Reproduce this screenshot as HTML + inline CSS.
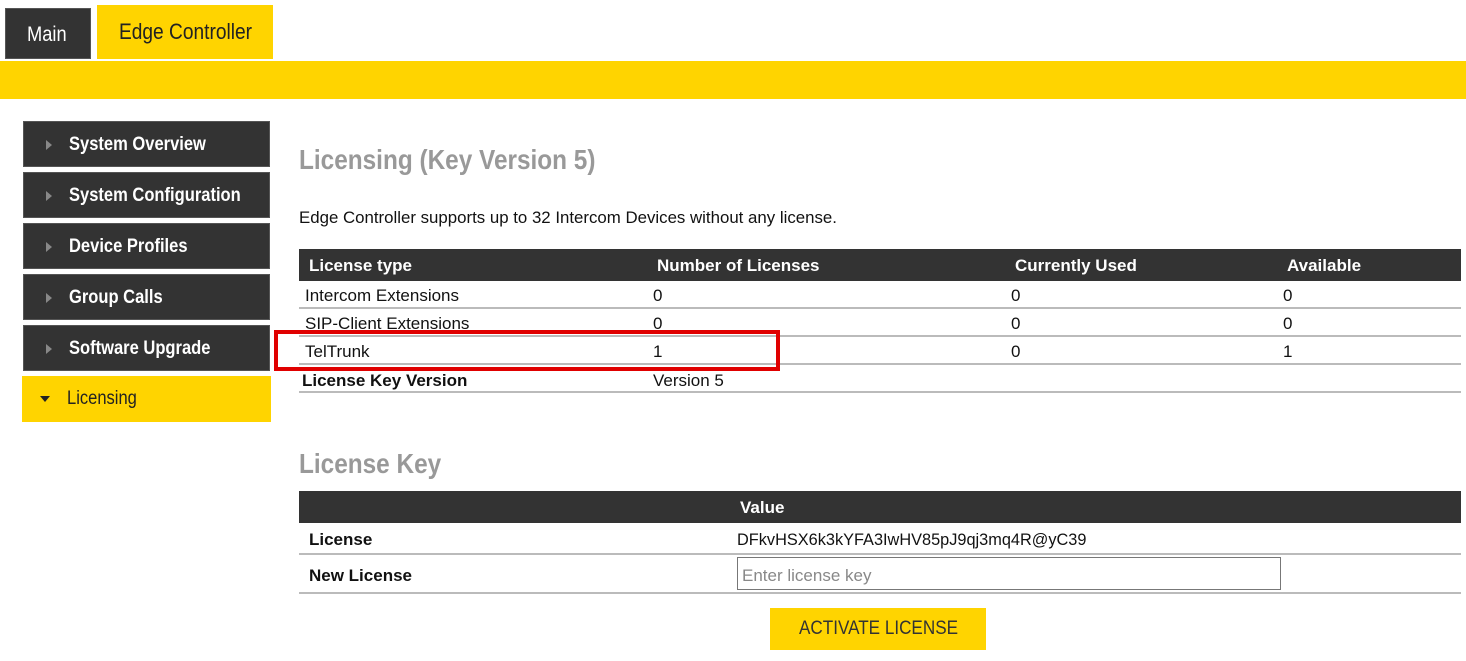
<!DOCTYPE html>
<html><head><meta charset="utf-8"><style>
*{margin:0;padding:0;box-sizing:border-box}
body{width:1466px;height:661px;background:#fff;position:relative;overflow:hidden;font-family:"Liberation Sans",sans-serif;color:#111}
.a{position:absolute}
.dark{background:#333;color:#fff}
.yel{background:#ffd400}
.s{display:inline-block;transform:scaleX(0.87);transform-origin:left center;white-space:nowrap}
.nav{position:absolute;left:23px;width:247px;height:46px;background:#333;color:#fff;font-size:19px;line-height:46px;padding-left:45px;font-weight:bold;border:1px solid #555}
.nav:before{content:"";position:absolute;left:22px;top:18px;border-left:6px solid #888;border-top:5px solid transparent;border-bottom:5px solid transparent}
.t{position:absolute;font-size:17px;white-space:nowrap}
.hr{position:absolute;left:299px;width:1162px;height:2px;background:#bbb}
</style></head><body>
<div class="a dark" style="left:5px;top:8px;width:86px;height:51px;font-size:21px;line-height:51px;padding-left:21px;border:1px solid #555"><span class="s">Main</span></div>
<div class="a yel" style="left:97px;top:5px;width:176px;height:54px;font-size:22px;line-height:54px;padding-left:22px;color:#222"><span class="s">Edge Controller</span></div>
<div class="a yel" style="left:0;top:61px;width:1466px;height:38px"></div>

<div class="nav" style="top:121px"><span class="s">System Overview</span></div>
<div class="nav" style="top:172px"><span class="s">System Configuration</span></div>
<div class="nav" style="top:223px"><span class="s">Device Profiles</span></div>
<div class="nav" style="top:274px"><span class="s">Group Calls</span></div>
<div class="nav" style="top:325px"><span class="s">Software Upgrade</span></div>
<div class="a yel" style="left:22px;top:376px;width:249px;height:46px;font-size:19px;line-height:46px;padding-left:45px;color:#222"><span class="s">Licensing</span></div>
<div class="a" style="left:40px;top:396px;border-top:6px solid #222;border-left:5px solid transparent;border-right:5px solid transparent"></div>

<div class="t" style="left:299px;top:144px;font-size:28px;font-weight:bold;color:#999"><span class="s">Licensing (Key Version 5)</span></div>
<div class="t" style="left:299px;top:208px"><span class="s" style="transform:scaleX(0.99)">Edge Controller supports up to 32 Intercom Devices without any license.</span></div>

<div class="a dark" style="left:299px;top:249px;width:1162px;height:32px"></div>
<div class="t" style="left:309px;top:256px;color:#fff;font-weight:bold">License type</div>
<div class="t" style="left:657px;top:256px;color:#fff;font-weight:bold">Number of Licenses</div>
<div class="t" style="left:1015px;top:256px;color:#fff;font-weight:bold">Currently Used</div>
<div class="t" style="left:1287px;top:256px;color:#fff;font-weight:bold">Available</div>

<div class="t" style="left:305px;top:286px">Intercom Extensions</div><div class="t" style="left:653px;top:286px">0</div><div class="t" style="left:1011px;top:286px">0</div><div class="t" style="left:1283px;top:286px">0</div>
<div class="hr" style="top:307px"></div>
<div class="t" style="left:305px;top:314px">SIP-Client Extensions</div><div class="t" style="left:653px;top:314px">0</div><div class="t" style="left:1011px;top:314px">0</div><div class="t" style="left:1283px;top:314px">0</div>
<div class="hr" style="top:335px"></div>
<div class="t" style="left:305px;top:342px">TelTrunk</div><div class="t" style="left:653px;top:342px">1</div><div class="t" style="left:1011px;top:342px">0</div><div class="t" style="left:1283px;top:342px">1</div>
<div class="hr" style="top:363px"></div>
<div class="t" style="left:302px;top:371px;font-weight:bold">License Key Version</div><div class="t" style="left:653px;top:371px">Version 5</div>
<div class="hr" style="top:391px"></div>
<div class="a" style="left:274px;top:330px;width:506px;height:41px;border:4px solid #e00000"></div>

<div class="t" style="left:299px;top:448px;font-size:28px;font-weight:bold;color:#999"><span class="s">License Key</span></div>
<div class="a dark" style="left:299px;top:491px;width:1162px;height:32px"></div>
<div class="t" style="left:740px;top:498px;color:#fff;font-weight:bold">Value</div>
<div class="t" style="left:309px;top:530px;font-weight:bold">License</div>
<div class="t" style="left:737px;top:530px"><span class="s" style="transform:scaleX(0.96)">DFkvHSX6k3kYFA3IwHV85pJ9qj3mq4R@yC39</span></div>
<div class="hr" style="top:553px"></div>
<div class="t" style="left:309px;top:566px;font-weight:bold">New License</div>
<div class="a" style="left:737px;top:557px;width:544px;height:33px;border:1px solid #777"></div>
<div class="t" style="left:742px;top:566px;color:#888">Enter license key</div>
<div class="hr" style="top:592px"></div>
<div class="a yel" style="left:770px;top:608px;width:216px;height:42px;font-size:19px;line-height:42px;padding-left:29px;color:#333"><span class="s" style="transform:scaleX(0.9)">ACTIVATE LICENSE</span></div>
</body></html>
